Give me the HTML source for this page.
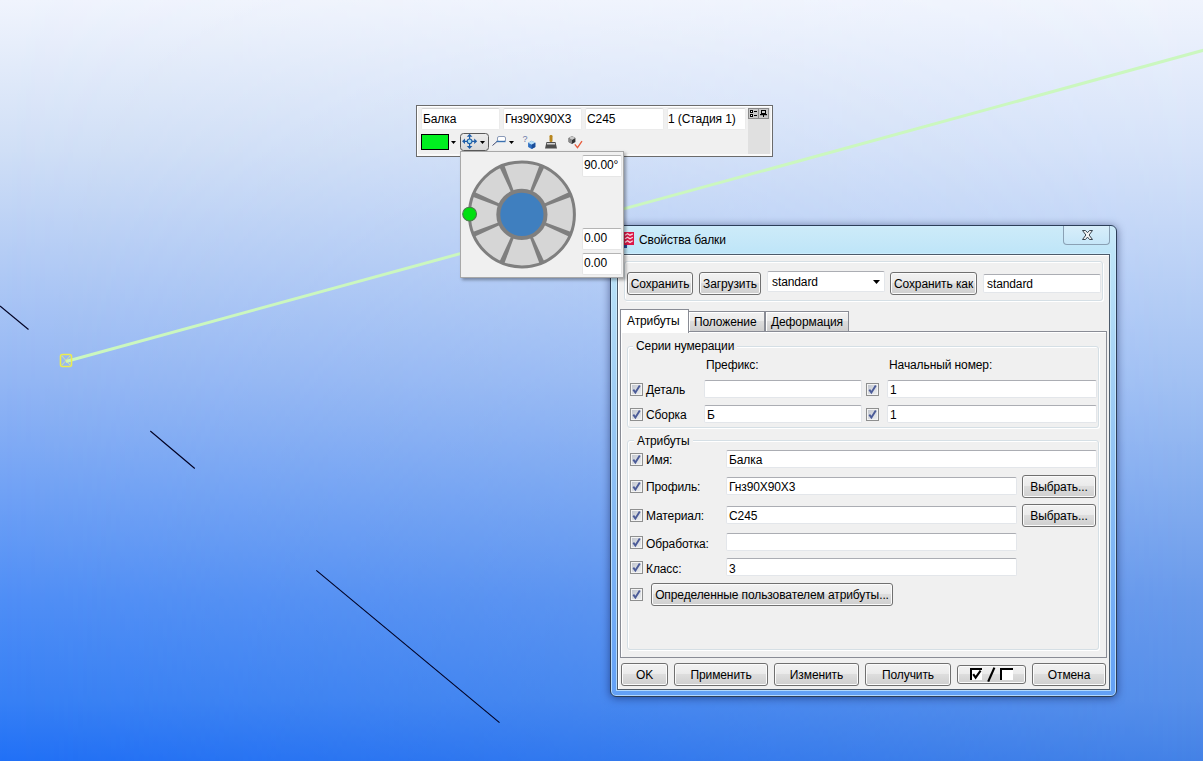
<!DOCTYPE html>
<html><head><meta charset="utf-8"><style>
*{box-sizing:border-box;margin:0;padding:0}
html,body{width:1203px;height:761px;overflow:hidden}
body{position:relative;background:linear-gradient(180deg,#f0f4fd 0px,#d0dff6 150px,#93b6f4 380px,#4f8ef6 600px,#3780f5 700px,#2170f6 761px);font-family:"Liberation Sans",sans-serif;font-size:12px;letter-spacing:-0.1px;color:#000;line-height:14px}
.a{position:absolute;white-space:nowrap}
.tf{position:absolute;background:#fff;border:1px solid #e3e6ea;border-top-color:#abadb3;border-radius:2px}
.tbf{position:absolute;background:#fff;border:1px solid #ebebeb;border-top-color:#d6d6d6;border-radius:2px}
.btn{position:absolute;border:1px solid #707070;border-radius:3px;background:linear-gradient(180deg,#f2f2f2 0%,#ebebeb 45%,#dddddd 50%,#cfcfcf 100%);box-shadow:inset 0 0 0 1px #fbfbfb;text-align:center;padding-top:4px;white-space:nowrap}
.cb{position:absolute;width:13px;height:13px;border:1px solid #8e8f8f;background:#f4f4f4}
.cb svg{position:absolute;left:0;top:0}
.grp{position:absolute;border:1px solid #d5dfe5;border-radius:3px;box-shadow:inset 1px 1px 0 #fff,1px 1px 0 #fff}
.tbf2{position:absolute;background:#fff;border:1px solid #e6e6e6;border-top-color:#b4b4b4;border-radius:2px}
.tab{position:absolute;border:1px solid #898c95;border-bottom:none;background:linear-gradient(180deg,#f2f2f2 0%,#ebebeb 45%,#dddddd 50%,#cfcfcf 100%);box-shadow:inset 1px 1px 0 #fff}
</style></head><body>
<svg width="0" height="0" style="position:absolute"><defs><linearGradient id="cbg" x1="0" y1="0" x2="1" y2="1"><stop offset="0" stop-color="#c3c7cf"/><stop offset="1" stop-color="#eceef0"/></linearGradient><linearGradient id="mvg" x1="0" y1="0" x2="0" y2="1"><stop offset="0" stop-color="#ececec"/><stop offset="1" stop-color="#d8d8d8"/></linearGradient></defs></svg>
<div class="a" style="left:0;top:0;width:1203px;height:761px;background:linear-gradient(180deg,#f0f4fd 0px,#d5e2f9 150px,#a2c1f3 380px,#699aeb 600px,#578fe9 700px,#4482e6 761px);-webkit-mask-image:linear-gradient(90deg,transparent,#000);mask-image:linear-gradient(90deg,transparent,#000)"></div>
<svg class="a" style="left:0;top:0" width="1203" height="761">
<line x1="0" y1="306" x2="28.5" y2="329.5" stroke="#000022" stroke-width="1.1"/>
<line x1="150.3" y1="431" x2="194.8" y2="468.5" stroke="#000022" stroke-width="1.1"/>
<line x1="316.3" y1="570.3" x2="499.5" y2="722.6" stroke="#000022" stroke-width="1.1"/>
<line x1="66" y1="361.5" x2="1210" y2="48.5" stroke="#cbf7bf" stroke-width="3"/>
<rect x="60.5" y="354.5" width="11" height="12" rx="2" fill="none" stroke="#ecec50" stroke-width="1.6"/>
<line x1="62" y1="356" x2="70" y2="365" stroke="#e8f080" stroke-width="0.8"/>
<line x1="70" y1="356" x2="62" y2="365" stroke="#e8f080" stroke-width="0.8"/>
</svg>
<div class="a" style="left:416px;top:105px;width:357px;height:52px;border:1px solid #6b6b6b;background:#f0f0f0;box-shadow:inset 1px 1px 0 #fff,inset -1px -2px 0 #fafafa"></div>
<div class="tbf" style="left:421px;top:108px;width:79px;height:22px"></div>
<div class="tbf" style="left:503px;top:108px;width:79px;height:22px"></div>
<div class="tbf" style="left:585px;top:108px;width:79px;height:22px"></div>
<div class="tbf" style="left:667px;top:108px;width:79px;height:22px"></div>
<div class="a" style="left:423px;top:112px;">Балка</div>
<div class="a" style="left:505px;top:112px;">Гнз90X90X3</div>
<div class="a" style="left:587px;top:112px;">C245</div>
<div class="a" style="left:668px;top:112px;">1 (Стадия 1)</div>
<div class="a" style="left:748px;top:108px;width:22px;height:46px;background:#e0e0e0"></div>
<div class="a" style="left:748px;top:108px;width:11px;height:11px;border:1px solid #8a8a8a;background:#c8c8c8"></div>
<div class="a" style="left:758px;top:108px;width:11px;height:11px;border:1px solid #8a8a8a;background:#c8c8c8"></div>
<div class="a" style="left:421px;top:134px;width:28px;height:16px;border:1px solid #000;background:#00f020"></div>
<svg class="a" style="left:416px;top:105px" width="357" height="52">
<path d="M35,36 h5 l-2.5,3 z" fill="#000"/>
<rect x="44.5" y="28.5" width="28" height="17" rx="3" fill="url(#mvg)" stroke="#5a5a5a"/>
<g transform="translate(53.6,36.3)" fill="#1f5ea8" stroke="none">
<path d="M-0.6,-2 v-3.5 h1.2 v3.5 z M-0.6,2 v3.5 h1.2 v-3.5 z M-2,-0.6 h-3.5 v1.2 h3.5 z M2,-0.6 h3.5 v1.2 h-3.5 z"/>
<path d="M0,-7.6 l-2.8,3 h5.6 z M0,7.6 l-2.8,-3 h5.6 z M-7.6,0 l3,-2.8 v5.6 z M7.6,0 l-3,-2.8 v5.6 z"/>
<circle r="2.3" fill="#a6def0" stroke="#1f5ea8" stroke-width="1.1"/>
</g>
<path d="M64,36 h5 l-2.5,3 z" fill="#000"/>
<path d="M76.5,40.5 L81,36.5" stroke="#404a70" stroke-width="1"/>
<rect x="81.5" y="31.5" width="8" height="5" rx="1.5" fill="#fff" stroke="#8a9ab8"/>
<path d="M80.5,36.5 h9" stroke="#3a70b0" stroke-width="1.4"/>
<path d="M93,36 h5 l-2.5,3 z" fill="#000"/>
<text x="106.5" y="37" font-size="9" fill="#6a78a8" font-family="Liberation Sans">?</text>
<g transform="translate(115.7,39.8)"><path d="M0,-4 L3.6,-2 L3.6,2.2 L0,4.2 L-3.6,2.2 L-3.6,-2 z" fill="#2f6fc0"/><path d="M0,-4 L3.6,-2 L0,0 L-3.6,-2 z" fill="#b8e0f8"/><path d="M0,0 L3.6,-2 L3.6,2.2 L0,4.2 z" fill="#1a4c98"/></g>
<rect x="133.5" y="30" width="3" height="7" rx="1.2" fill="#b8861e"/>
<path d="M130.5,37 h9 l1.5,6.5 h-12 z" fill="#4e4e4e"/>
<rect x="131" y="38.2" width="8" height="1.2" fill="#f4f4f4"/>
<g transform="translate(156,35)"><path d="M0,-4 L3.4,-2 L3.4,2 L0,4 L-3.4,2 L-3.4,-2 z" fill="#333"/><path d="M0,-4 L3.4,-2 L0,0 L-3.4,-2 z" fill="#c8c8c8"/><path d="M-3.4,-2 L0,0 L0,4 L-3.4,2 z" fill="#8a8a8a"/></g>
<path d="M158.8,39.3 L161.5,42.6 L166,36.2" fill="none" stroke="#e85a3a" stroke-width="1.3"/>
<g fill="#000">
<rect x="334" y="5" width="3" height="3"/><rect x="334" y="9" width="3" height="3"/>
<rect x="338" y="6" width="3" height="1"/><rect x="338" y="10" width="3" height="1"/>
<rect x="345" y="5" width="5" height="4"/><rect x="344" y="9" width="7" height="1.2"/><rect x="347" y="10" width="1" height="2"/>
</g>
<rect x="335" y="6" width="1" height="1" fill="#fff"/><rect x="335" y="10" width="1" height="1" fill="#fff"/>
<rect x="346" y="6" width="3" height="2" fill="#ccc"/>
</svg>
<div class="a" style="left:610px;top:225px;width:507px;height:472px;border:1px solid #2c3e58;border-radius:6px 6px 6px 6px;background:linear-gradient(180deg,#cdebf9 0px,#bee5f8 28px,#98c8f4 200px,#62a0f6 471px);box-shadow:0 0 0 1px rgba(205,235,255,.75) inset,0 1px 8px rgba(0,10,60,.5)"></div>
<div class="a" style="left:1063px;top:226px;width:47px;height:19px;border:1px solid #8aa0b4;border-top:none;border-radius:0 0 4px 4px;background:linear-gradient(180deg,#d8eefa,#c6e6f8)"></div>
<div class="a" style="left:639px;top:233px;">Свойства балки</div>
<svg class="a" style="left:624px;top:232px" width="11" height="16">
<rect x="0" y="0" width="10" height="13" fill="#dc1848"/>
<path d="M1,3.2 L3.5,1.8 L6,3.2 L8.8,1.8 M1,6.8 L3.5,5.2 L6,6.8 L8.8,5.2 M1,10.4 L3.5,8.8 L6,10.4 L8.8,8.8" stroke="#f8d8e0" stroke-width="1.3" fill="none"/>
<rect x="0" y="13" width="3" height="3" fill="#2a4a9a"/>
</svg>
<svg class="a" style="left:1081px;top:229px" width="13" height="12">
<path d="M1.5,1.5 h3 l2,2.2 l2,-2.2 h3 l-3.4,4.5 l3.4,4.5 h-3 l-2,-2.4 l-2,2.4 h-3 l3.4,-4.5 z" fill="#f4f4f4" stroke="#3a4650" stroke-width="1" stroke-linejoin="round"/>
</svg>
<div class="a" style="left:617px;top:254px;width:493px;height:436px;border:1px solid #4c5a6a;background:#f0f0f0;box-shadow:inset 1px 1px 0 #fff,0 0 0 1px rgba(210,240,255,.7)"></div>
<div class="grp" style="left:624px;top:261px;width:479px;height:40px"></div>
<div class="btn" style="left:627px;top:272px;width:66px;height:23px">Сохранить</div>
<div class="btn" style="left:699px;top:272px;width:62px;height:23px">Загрузить</div>
<div class="tf" style="left:767px;top:271px;width:118px;height:21px"></div>
<div class="a" style="left:772px;top:275px;">standard</div>
<svg class="a" style="left:873px;top:280px" width="8" height="5"><path d="M0,0 h7 l-3.5,4 z" fill="#000"/></svg>
<div class="btn" style="left:890px;top:272px;width:87px;height:23px">Сохранить как</div>
<div class="tf" style="left:983px;top:274px;width:118px;height:19px"></div>
<div class="a" style="left:987px;top:277px;">standard</div>
<div class="a" style="left:620px;top:331px;width:487px;height:327px;border:1px solid #898c95;background:#f0f0f0;box-shadow:inset 1px 1px 0 #fff"></div>
<div class="tab" style="left:688px;top:311px;width:77px;height:20px"></div>
<div class="tab" style="left:765px;top:311px;width:84px;height:20px"></div>
<div class="a" style="left:620px;top:309px;width:69px;height:24px;border:1px solid #898c95;border-bottom:none;background:#fff"></div>
<div class="a" style="left:627px;top:314px;">Атрибуты</div>
<div class="a" style="left:694px;top:315px;">Положение</div>
<div class="a" style="left:771px;top:315px;">Деформация</div>
<div class="grp" style="left:627px;top:346px;width:472px;height:82px"></div>
<div class="a" style="left:633px;top:339px;background:#f0f0f0;padding:0 3px">Серии нумерации</div>
<div class="a" style="left:706px;top:358px;">Префикс:</div>
<div class="a" style="left:889px;top:358px;">Начальный номер:</div>
<div class="cb" style="left:630px;top:383px"><svg width="11" height="11"><rect x="1" y="1" width="9" height="9" fill="url(#cbg)"/><path d="M2.3,5.6 L4.4,8.6 L8.8,1.6" fill="none" stroke="#4b5b98" stroke-width="1.9"/></svg></div>
<div class="a" style="left:646px;top:383px;">Деталь</div>
<div class="tf" style="left:704px;top:380px;width:158px;height:18px"></div>
<div class="cb" style="left:866px;top:383px"><svg width="11" height="11"><rect x="1" y="1" width="9" height="9" fill="url(#cbg)"/><path d="M2.3,5.6 L4.4,8.6 L8.8,1.6" fill="none" stroke="#4b5b98" stroke-width="1.9"/></svg></div>
<div class="tf" style="left:887px;top:380px;width:210px;height:18px"></div>
<div class="a" style="left:890px;top:383px;">1</div>
<div class="cb" style="left:630px;top:408px"><svg width="11" height="11"><rect x="1" y="1" width="9" height="9" fill="url(#cbg)"/><path d="M2.3,5.6 L4.4,8.6 L8.8,1.6" fill="none" stroke="#4b5b98" stroke-width="1.9"/></svg></div>
<div class="a" style="left:646px;top:408px;">Сборка</div>
<div class="tf" style="left:704px;top:405px;width:158px;height:18px"></div>
<div class="a" style="left:707px;top:408px;">Б</div>
<div class="cb" style="left:866px;top:408px"><svg width="11" height="11"><rect x="1" y="1" width="9" height="9" fill="url(#cbg)"/><path d="M2.3,5.6 L4.4,8.6 L8.8,1.6" fill="none" stroke="#4b5b98" stroke-width="1.9"/></svg></div>
<div class="tf" style="left:887px;top:405px;width:210px;height:18px"></div>
<div class="a" style="left:890px;top:408px;">1</div>
<div class="grp" style="left:627px;top:440px;width:472px;height:210px"></div>
<div class="a" style="left:634px;top:434px;background:#f0f0f0;padding:0 3px">Атрибуты</div>
<div class="cb" style="left:630px;top:453px"><svg width="11" height="11"><rect x="1" y="1" width="9" height="9" fill="url(#cbg)"/><path d="M2.3,5.6 L4.4,8.6 L8.8,1.6" fill="none" stroke="#4b5b98" stroke-width="1.9"/></svg></div>
<div class="a" style="left:646px;top:453px;">Имя:</div>
<div class="tf" style="left:726px;top:450px;width:371px;height:18px"></div>
<div class="a" style="left:729px;top:453px;">Балка</div>
<div class="cb" style="left:630px;top:480px"><svg width="11" height="11"><rect x="1" y="1" width="9" height="9" fill="url(#cbg)"/><path d="M2.3,5.6 L4.4,8.6 L8.8,1.6" fill="none" stroke="#4b5b98" stroke-width="1.9"/></svg></div>
<div class="a" style="left:646px;top:480px;">Профиль:</div>
<div class="tf" style="left:726px;top:477px;width:291px;height:18px"></div>
<div class="a" style="left:729px;top:480px;">Гнз90X90X3</div>
<div class="cb" style="left:630px;top:509px"><svg width="11" height="11"><rect x="1" y="1" width="9" height="9" fill="url(#cbg)"/><path d="M2.3,5.6 L4.4,8.6 L8.8,1.6" fill="none" stroke="#4b5b98" stroke-width="1.9"/></svg></div>
<div class="a" style="left:646px;top:509px;">Материал:</div>
<div class="tf" style="left:726px;top:506px;width:291px;height:18px"></div>
<div class="a" style="left:729px;top:509px;">C245</div>
<div class="cb" style="left:630px;top:536px"><svg width="11" height="11"><rect x="1" y="1" width="9" height="9" fill="url(#cbg)"/><path d="M2.3,5.6 L4.4,8.6 L8.8,1.6" fill="none" stroke="#4b5b98" stroke-width="1.9"/></svg></div>
<div class="a" style="left:646px;top:537px;">Обработка:</div>
<div class="tf" style="left:726px;top:533px;width:291px;height:18px"></div>
<div class="cb" style="left:630px;top:561px"><svg width="11" height="11"><rect x="1" y="1" width="9" height="9" fill="url(#cbg)"/><path d="M2.3,5.6 L4.4,8.6 L8.8,1.6" fill="none" stroke="#4b5b98" stroke-width="1.9"/></svg></div>
<div class="a" style="left:646px;top:562px;">Класс:</div>
<div class="tf" style="left:726px;top:558px;width:291px;height:18px"></div>
<div class="a" style="left:729px;top:562px;">3</div>
<div class="btn" style="left:1022px;top:475px;width:74px;height:23px">Выбрать...</div>
<div class="btn" style="left:1022px;top:504px;width:74px;height:23px">Выбрать...</div>
<div class="cb" style="left:630px;top:588px"><svg width="11" height="11"><rect x="1" y="1" width="9" height="9" fill="url(#cbg)"/><path d="M2.3,5.6 L4.4,8.6 L8.8,1.6" fill="none" stroke="#4b5b98" stroke-width="1.9"/></svg></div>
<div class="btn" style="left:651px;top:583px;width:242px;height:23px">Определенные пользователем атрибуты...</div>
<div class="btn" style="left:621px;top:663px;width:47px;height:23px">OK</div>
<div class="btn" style="left:674px;top:663px;width:94px;height:23px">Применить</div>
<div class="btn" style="left:774px;top:663px;width:85px;height:23px">Изменить</div>
<div class="btn" style="left:865px;top:663px;width:86px;height:23px">Получить</div>
<div class="btn" style="left:957px;top:665px;width:69px;height:19px"></div>
<svg class="a" style="left:957px;top:665px" width="69" height="19">
<rect x="14" y="4" width="11" height="11" fill="#fff"/>
<path d="M14,15 V4 H25" fill="none" stroke="#000" stroke-width="2"/>
<path d="M16.2,9.2 L18.6,12.6 L23.6,5.6" fill="none" stroke="#000" stroke-width="2.1"/>
<path d="M31.2,16.6 L37.4,2.6" stroke="#000" stroke-width="2.2"/>
<rect x="44" y="4" width="12" height="11" fill="#fff"/>
<path d="M44,15 V4 H56" fill="none" stroke="#000" stroke-width="2"/>
</svg>
<div class="btn" style="left:1032px;top:663px;width:74px;height:23px">Отмена</div>
<div class="a" style="left:460px;top:151px;width:164px;height:127px;border:1px solid #a8a8a8;background:#f0f0f0;box-shadow:2px 2px 3px rgba(0,0,0,.35)"></div>
<div class="tbf2" style="left:582px;top:155px;width:40px;height:22px"></div>
<div class="tbf2" style="left:582px;top:228px;width:40px;height:22px"></div>
<div class="tbf2" style="left:582px;top:253px;width:40px;height:22px"></div>
<div class="a" style="left:584px;top:158px;">90.00°</div>
<div class="a" style="left:584px;top:231px;">0.00</div>
<div class="a" style="left:584px;top:256px;">0.00</div>
<svg class="a" style="left:460px;top:151px" width="164" height="127">
<g transform="translate(61.9,63.4)">
<circle r="52.5" fill="#d6d6d6" stroke="#7f7f7f" stroke-width="3"/>
<g fill="#7f7f7f" id="sp">
<polygon points="-1.5,-25 1.5,-25 2.6,-53 -2.6,-53" transform="rotate(22.5)"/>
<polygon points="-1.5,-25 1.5,-25 2.6,-53 -2.6,-53" transform="rotate(67.5)"/>
<polygon points="-1.5,-25 1.5,-25 2.6,-53 -2.6,-53" transform="rotate(112.5)"/>
<polygon points="-1.5,-25 1.5,-25 2.6,-53 -2.6,-53" transform="rotate(157.5)"/>
<polygon points="-1.5,-25 1.5,-25 2.6,-53 -2.6,-53" transform="rotate(202.5)"/>
<polygon points="-1.5,-25 1.5,-25 2.6,-53 -2.6,-53" transform="rotate(247.5)"/>
<polygon points="-1.5,-25 1.5,-25 2.6,-53 -2.6,-53" transform="rotate(292.5)"/>
<polygon points="-1.5,-25 1.5,-25 2.6,-53 -2.6,-53" transform="rotate(337.5)"/>
</g>
<circle r="23.6" fill="#3f7fbf" stroke="#7f7f7f" stroke-width="4"/>
</g>
<circle cx="9.6" cy="63.1" r="6.9" fill="#00e010" stroke="#4a7a4a" stroke-width="1.1"/>
</svg>
</body></html>
